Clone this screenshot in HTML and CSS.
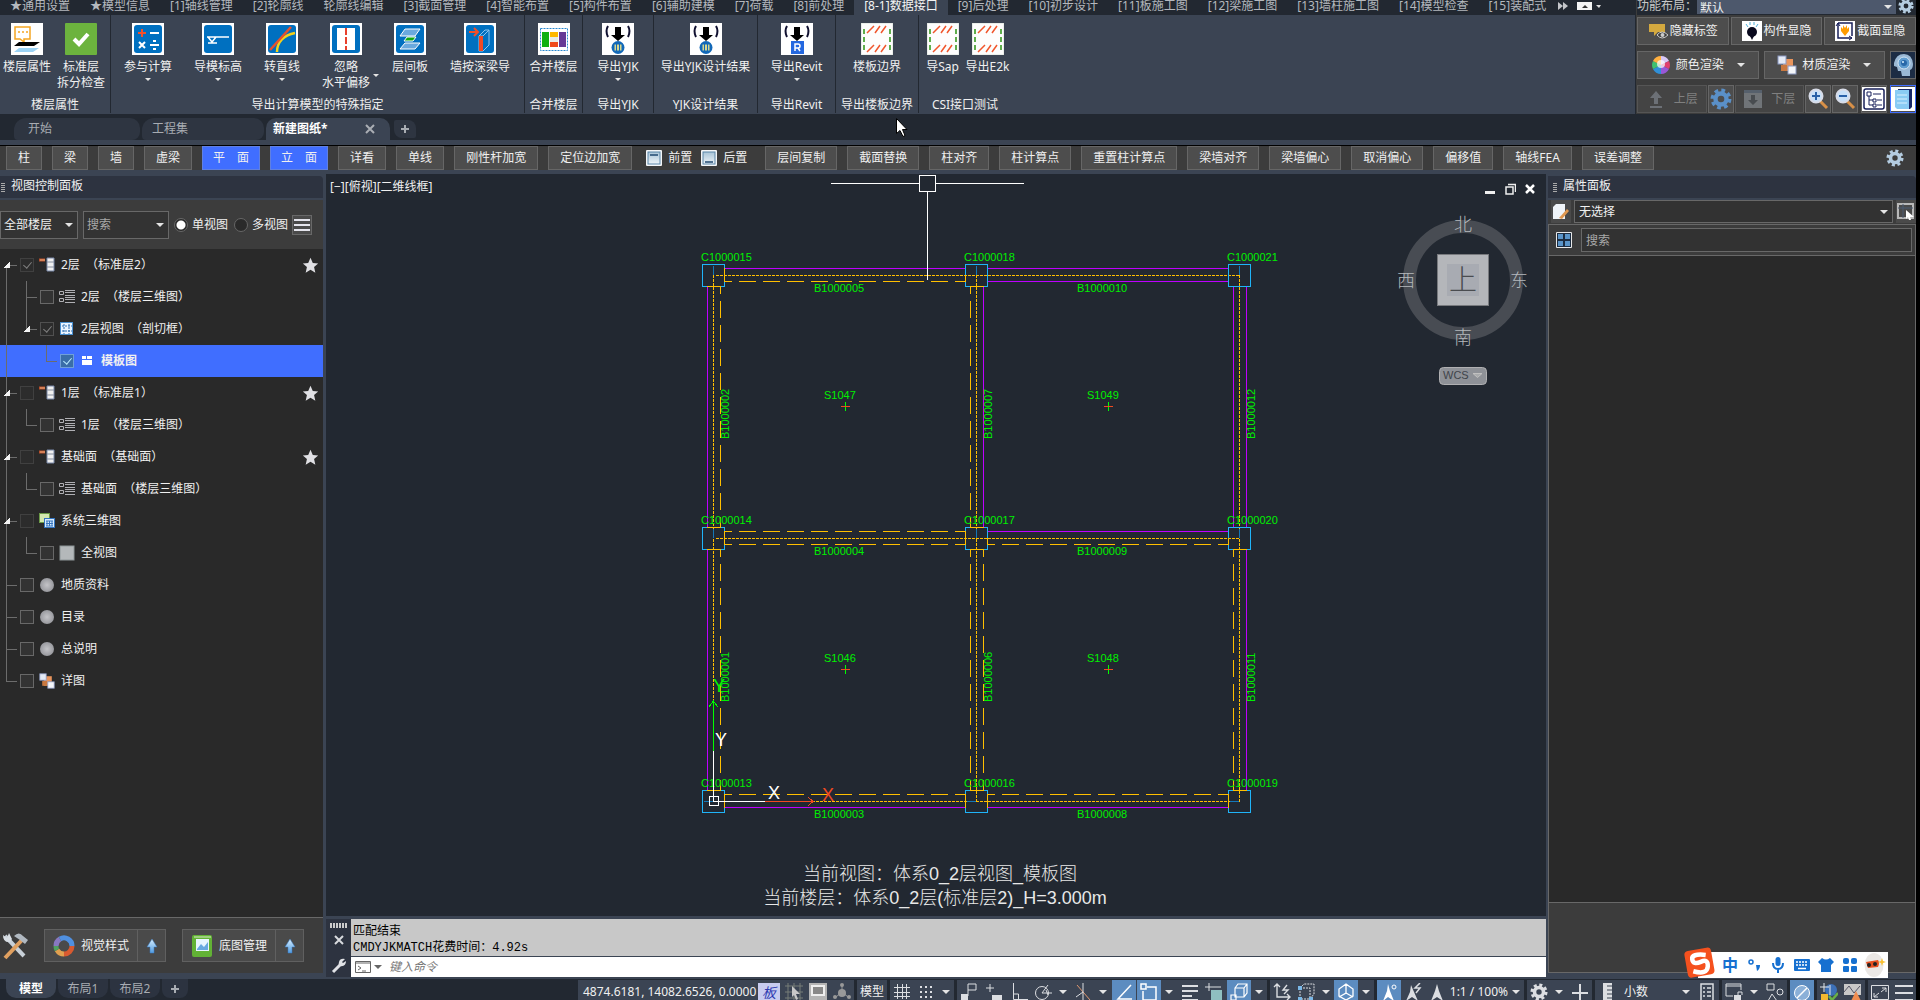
FILE: index.html
```html
<!DOCTYPE html>
<html lang="zh-CN">
<head>
<meta charset="utf-8">
<title>新建图纸*</title>
<link rel="stylesheet" href="styles.css">
</head>
<body>
<svg class="defs" aria-hidden="true">
  <defs>
    <radialGradient id="ball"><stop offset="0" stop-color="#c4c4c8"/><stop offset="1" stop-color="#98999e"/></radialGradient>
    <linearGradient id="glass" x1="0" y1="0" x2="0" y2="1"><stop offset="0" stop-color="#a8c4d8"/><stop offset="1" stop-color="#eef4f8"/></linearGradient>
    <linearGradient id="upblue" x1="0" y1="0" x2="0" y2="1"><stop offset="0" stop-color="#d8efff"/><stop offset="1" stop-color="#4f9ae0"/></linearGradient>
  </defs>
  <symbol id="r-layer" viewBox="0 0 32 32"><rect width="32" height="32" fill="#fff"/><path d="M4 4h15v12h-6v3l-4-3H4z" fill="none" stroke="#f5a623" stroke-width="1.5"/><path d="M7 9h2m2 0h2m2 0h2" stroke="#f5a623" stroke-width="1.5"/><path d="M8 19h21l-6 4H3z" fill="#000"/><path d="M8 25h20l-6 4H3z" fill="#9cd3f5"/></symbol>
  <symbol id="r-check" viewBox="0 0 32 32"><rect width="32" height="32" rx="1" fill="#6cb33e"/><path d="M9 16l5 5 9-10" fill="none" stroke="#fff" stroke-width="4"/></symbol>
  <symbol id="r-calc" viewBox="0 0 32 32"><rect width="32" height="32" fill="#fff"/><rect x="2" y="2" width="28" height="28" rx="3" fill="#0070c0"/><path d="M6 10h8M10 6v8" stroke="#f0502a" stroke-width="2"/><path d="M18 10h9M18 22h9M7 19l6 6m0-6l-6 6" stroke="#fff" stroke-width="2"/><path d="M21 18h3M21 26h3" stroke="#fff" stroke-width="2"/></symbol>
  <symbol id="r-elev" viewBox="0 0 32 32"><rect width="32" height="32" fill="#fff"/><rect x="2" y="2" width="28" height="28" rx="3" fill="#0070c0"/><path d="M5 14h22M6 14l4 5 4-5M6 20h9" fill="none" stroke="#fff" stroke-width="1.5"/></symbol>
  <symbol id="r-line" viewBox="0 0 32 32"><rect width="32" height="32" fill="#fff"/><rect x="2" y="2" width="28" height="28" rx="3" fill="#0070c0"/><path d="M11 29c0-10 7-17 18-19" fill="none" stroke="#f4d21a" stroke-width="2.5"/><path d="M4 27L25 4" stroke="#e8502c" stroke-width="2.5"/></symbol>
  <symbol id="r-off" viewBox="0 0 32 32"><rect width="32" height="32" fill="#fff"/><rect x="2" y="2" width="28" height="28" rx="3" fill="#0070c0"/><rect x="7" y="5" width="18" height="22" fill="#fff"/><path d="M16 5v22" stroke="#e8402c" stroke-width="2" stroke-dasharray="7 2"/></symbol>
  <symbol id="r-slab" viewBox="0 0 32 32"><rect width="32" height="32" fill="#fff"/><rect x="2" y="2" width="28" height="28" rx="3" fill="#0070c0"/><path d="M11 6h15l-5 7H6zM11 20h15l-5 6H6z" fill="#6aa9dd" stroke="#fff"/><path d="M13 14h9l-3 4h-9z" fill="#12a812" stroke="#fff"/></symbol>
  <symbol id="r-wall" viewBox="0 0 32 32"><rect width="32" height="32" fill="#fff"/><rect x="2" y="2" width="28" height="28" rx="3" fill="#0070c0"/><path d="M5 9h8M10 5l4 4-4 4" fill="none" stroke="#f0502a" stroke-width="2"/><path d="M15 13l6-6h4v15l-6 6h-4zM19 13l6-6M15 13h4" fill="none" stroke="#8cc4ee"/><path d="M15 13h4v15h-4z" fill="#f04a24"/></symbol>
  <symbol id="r-merge" viewBox="0 0 32 32"><rect width="32" height="32" fill="#fff"/><rect x="2.500" y="5.500" width="27" height="22" fill="none" stroke="#2888d0" stroke-dasharray="2 1"/><path d="M4 9h7v15H4z" fill="#10b010"/><path d="M12 9h8v5h-8z" fill="#ffb800"/><path d="M12 19h8v5h-8z" fill="#f04a1a"/><path d="M12 14h8v5h-8z" fill="#e8ece8"/><path d="M21 9h7v15h-7z" fill="#653a96"/></symbol>
  <symbol id="r-yjk" viewBox="0 0 32 32"><rect width="32" height="32" fill="#fff"/><path d="M6 3q-3 5 0 11M26 3q3 5 0 11" fill="none" stroke="#101030" stroke-width="2"/><path d="M13 4h6v8h4l-7 6-7-6h4z" fill="#000"/><circle cx="16" cy="24.500" r="6.500" fill="#1268b8"/><path d="M12 21h8v7h-8zM14.500 21v7M17.500 21v7" fill="#d8d890" stroke="#1268b8"/></symbol>
  <symbol id="r-rvt" viewBox="0 0 32 32"><rect width="32" height="32" fill="#fff"/><path d="M6 3q-3 5 0 11M26 3q3 5 0 11" fill="none" stroke="#101030" stroke-width="2"/><path d="M13 4h6v8h4l-7 6-7-6h4z" fill="#000"/><rect x="10" y="18" width="13" height="13" fill="#2468e0"/><path d="M14 28v-7h3q2 0 2 2t-2 2h-3m3 0l2 3" fill="none" stroke="#fff" stroke-width="1.500"/></symbol>
  <symbol id="r-edge" viewBox="0 0 32 32"><rect width="32" height="32" fill="#fdfdfd" stroke="#d8e0d8"/><path d="M6 10l7-7m1 7l5-7m1 7l5-7M6 29l7-7m1 7l5-7m1 7l5-7" stroke="#f0562c" stroke-width="1.500"/><path d="M3 6v24M29 6v24" stroke="#5fae4c" stroke-width="2" stroke-dasharray="5 3"/></symbol>
  <symbol id="gear" viewBox="0 0 20 20"><circle cx="10" cy="10" r="7.500" fill="none" stroke="currentColor" stroke-width="4" stroke-dasharray="3.200 2.700"/><circle cx="10" cy="10" r="5" fill="none" stroke="currentColor" stroke-width="4"/></symbol>
  <symbol id="tag" viewBox="0 0 20 20"><path d="M1 3h16v8h-7l-4 4v-4H1z" fill="#d4a93f"/><path d="M9 14q5-6 11 0q-6 6-11 0z" fill="#3c3c3c" stroke="#ccc"/><circle cx="14.500" cy="14" r="2" fill="#ccc"/></symbol>
  <symbol id="bulb" viewBox="0 0 20 20"><rect width="20" height="20" fill="#fff"/><path d="M4 3l2 3M8 1v3M12 1v3M16 3l-2 3" stroke="#50b0d8"/><circle cx="10" cy="11" r="5" fill="#08081c"/><path d="M8 15h4l-2 4z" fill="#08081c"/></symbol>
  <symbol id="bulb2" viewBox="0 0 20 20"><rect width="20" height="20" fill="#fff"/><path d="M3 2h14v13M3 2v15h14" fill="none" stroke="#18205a" stroke-width="1.500"/><path d="M1 5l2-3 2 3M14 15l3 2-3 2" fill="none" stroke="#18205a"/><path d="M6 6l2 2V4l2 3 2-3v4l2-2v4l-4 5-4-5z" fill="#ff9c00"/></symbol>
  <symbol id="wheel" viewBox="0 0 20 20"><path d="M10 10L10 1A9 9 0 0 1 18 6z" fill="#d8c8f8"/><path d="M10 10L18 6A9 9 0 0 1 18 14z" fill="#e04070"/><path d="M10 10L18 14A9 9 0 0 1 10 19z" fill="#9858d8"/><path d="M10 10V19A9 9 0 0 1 2 14z" fill="#3090d8"/><path d="M10 10L2 14A9 9 0 0 1 2 6z" fill="#40c070"/><path d="M10 10L2 6A9 9 0 0 1 10 1z" fill="#ffb040"/><circle cx="10" cy="9" r="4" fill="#fff" opacity=".7"/></symbol>
  <symbol id="mats" viewBox="0 0 20 20"><path d="M6 4h10v12H6z" fill="#e8945c"/><path d="M4 10h6v6H4z" fill="#c87840"/><rect x="1" y="1" width="8" height="8" fill="#e4eaf6" stroke="#8a98c0"/><rect x="11" y="11" width="8" height="8" fill="#f4f6fa" stroke="#8a98c0"/></symbol>
  <symbol id="head" viewBox="0 0 26 26"><rect width="26" height="26" fill="#1c2c44"/><path d="M4 11Q6 2 14 2t9 10q0 5-3 6v6h-8l-1-5H8l-1-4-3-1z" fill="#9ab8d4"/><circle cx="14" cy="11" r="6" fill="#5f9cd0" stroke="#d0e4f4"/><circle cx="14" cy="11" r="3" fill="#2868a8"/><circle cx="13" cy="10" r="1" fill="#d8f0ff"/></symbol>
  <symbol id="upper" viewBox="0 0 20 20"><path d="M10 2l6 7h-4v6H8V9H4zM4 17h12v2H4z" fill="currentColor"/></symbol>
  <symbol id="lower" viewBox="0 0 20 20"><path d="M1 1h18v18H1z" fill="#707478"/><path d="M1 1h18v3H1z" fill="#56606c"/><path d="M8 6h4v5h3l-5 5-5-5h3z" fill="#484c50"/></symbol>
  <symbol id="zin" viewBox="0 0 22 22"><path d="M13 13l7 7" stroke="#d89048" stroke-width="3"/><circle cx="9" cy="8" r="6.500" fill="#c8e0f8" stroke="#d8dce8" stroke-width="2"/><path d="M5 8h8M9 4v8" stroke="#2860a8" stroke-width="2"/></symbol>
  <symbol id="zout" viewBox="0 0 22 22"><path d="M13 13l7 7" stroke="#d89048" stroke-width="3"/><circle cx="9" cy="8" r="6.500" fill="#c8e0f8" stroke="#d8dce8" stroke-width="2"/><path d="M5 8h8" stroke="#2860a8" stroke-width="2"/></symbol>
  <symbol id="treeic" viewBox="0 0 24 24"><rect width="24" height="24" fill="#fff"/><rect x="2" y="2" width="20" height="20" rx="2" fill="none" stroke="#18205a" stroke-width="1.500"/><path d="M5 5h4v4H5zM11 7h8M7 9v9h4M7 13h4M11 12h3v3h-3zM11 17h3v3h-3zM15 13h5M15 18h5" fill="none" stroke="#18205a"/></symbol>
  <symbol id="book" viewBox="0 0 24 24"><rect width="24" height="24" fill="#fff"/><path d="M7 2h14v18l-2 2H7z" fill="#18286a"/><path d="M4 3h14v19H6l-2-2z" fill="#8accf4"/><path d="M6 8h10M6 12h10M6 16h10" stroke="#d8f0ff"/></symbol>
  <symbol id="front" viewBox="0 0 16 16"><rect width="16" height="16" rx="1" fill="#f4f6f8"/><rect x="2" y="2" width="12" height="12" fill="url(#glass)" stroke="#5a86a8"/><path d="M4 5h8" stroke="#204870" stroke-width="1.500"/></symbol>
  <symbol id="back" viewBox="0 0 16 16"><rect width="16" height="16" rx="1" fill="#f4f6f8"/><rect x="2" y="2" width="12" height="12" fill="url(#glass)" stroke="#5a86a8"/><path d="M4 12h8" stroke="#204870" stroke-width="1.500"/></symbol>
  <symbol id="t-floor" viewBox="0 0 16 16"><path d="M0 3h6" stroke="#b8502c" stroke-width="3"/><path d="M1 3h5" stroke="#f0b080"/><path d="M8 1h7v13H8z" fill="#f0f0f0" stroke="#7888a8"/><path d="M8 5h7M8 10h7" stroke="#8890a0"/></symbol>
  <symbol id="t-list" viewBox="0 0 16 16"><path d="M.5 2.500h4v3h-4zM.5 9.500h4v3h-4z" fill="none" stroke="#b0b0b4"/><path d="M6 1.500h10M6 3.500h10M6 6.500h10M6 8.500h10M6 10.500h10M6 13.500h10" stroke="#b0b0b4"/></symbol>
  <symbol id="t-grid" viewBox="0 0 16 16"><rect x="1.500" y="1.500" width="12" height="12" fill="#eaf4ff" stroke="#4a90d0"/><path d="M5 3v10M10 3v10M3 5h10M3 10h10" stroke="#3070b0" stroke-dasharray="2 1"/></symbol>
  <symbol id="t-mod" viewBox="0 0 16 16"><path d="M3 3h4v3H3zM8 3h5v3H8zM3 7h10v5H3z" fill="#fff"/></symbol>
  <symbol id="t-sys" viewBox="0 0 16 16"><rect x=".5" y=".5" width="10" height="9" fill="#d4e8b0" stroke="#6c9a48"/><rect x="5.500" y="5.500" width="10" height="9" fill="#d8ecff" stroke="#3474c0"/><path d="M8 8v5M10.500 8v5M13 8v5M7 8h7M7 10.500h7M7 13h7" stroke="#3474c0"/></symbol>
  <symbol id="t-sq" viewBox="0 0 16 16"><rect x="1" y="1" width="14" height="14" fill="#b4b8ba" stroke="#8e9698"/></symbol>
  <symbol id="t-ball" viewBox="0 0 16 16"><circle cx="8" cy="8" r="7" fill="url(#ball)"/></symbol>
  <symbol id="star" viewBox="0 0 20 20"><path d="M10 1l2.700 6 6.300.6-4.800 4.300 1.500 6.500L10 15l-5.700 3.400 1.500-6.500L1 7.600 7.300 7z" fill="#e0e0e4"/></symbol>
  <symbol id="x" viewBox="0 0 10 10"><path d="M1 1l8 8M9 1l-8 8" stroke="currentColor" stroke-width="2"/></symbol>
  <symbol id="plus" viewBox="0 0 10 10"><path d="M5 1v8M1 5h8" stroke="currentColor" stroke-width="2"/></symbol>
  <symbol id="up" viewBox="0 0 12 16"><path d="M6 1l5 8H8v6H4V9H1z" fill="url(#upblue)" stroke="#3878c0" stroke-width=".5"/></symbol>
  <symbol id="tools" viewBox="0 0 28 28"><path d="M4 4l19 20" stroke="#c8d0d8" stroke-width="4"/><path d="M2 3q0 8 7 7l2-3-3-6-2 5z" fill="#d8dee4"/><path d="M21 8L4 26" stroke="#e0a060" stroke-width="4"/><path d="M13 4q5-5 9 0l5 4-3 4-5-4z" fill="#b0b8c0"/></symbol>
  <symbol id="ring" viewBox="0 0 22 22"><g fill="none" stroke-width="5"><path d="M3 11A8 8 0 0 1 7 4" stroke="#8878c0"/><path d="M7 4A8 8 0 0 1 19 11" stroke="#5090e0"/><path d="M19 11A8 8 0 0 1 11 19" stroke="#d85a30"/><path d="M11 19A8 8 0 0 1 4 15" stroke="#e0a050"/><path d="M4 15A8 8 0 0 1 3 11" stroke="#50a060"/></g></symbol>
  <symbol id="pic" viewBox="0 0 20 22"><rect width="20" height="22" rx="2" fill="#62b235"/><path d="M2 2h17" stroke="#d8ecc8"/><rect x="4" y="4" width="13" height="12" fill="#e8f4ff"/><path d="M5 14l4-5 3 3 4-5v8H5z" fill="#68a8e0"/></symbol>
  <symbol id="wrench" viewBox="0 0 16 16"><path d="M2 14l7-7" stroke="#e0e2e6" stroke-width="3"/><path d="M14 1l-3 3 1 1 3-2q0 6-6 5-2-1-1-4 1-4 6-3z" fill="#e0e2e6"/></symbol>
  <symbol id="prompt" viewBox="0 0 16 14"><path d="M.5 1.500h15v11H.5zM.5 3h15" fill="none" stroke="#666"/><path d="M3 6l3 2-3 2M7 11h4" fill="none" stroke="#666"/></symbol>
  <symbol id="page" viewBox="0 0 18 18"><path d="M4 1h9v15H1V4z" fill="#f0f4f8"/><path d="M7 15l8-9 2 2-7 8z" fill="#e09850"/></symbol>
  <symbol id="pick" viewBox="0 0 18 18"><path d="M1 1h15v14H1z" fill="none" stroke="#b8b8b8" stroke-width="2"/><path d="M1 5h15M6 1v14" stroke="#4a5a70"/><path d="M9 7l8 7-4 0 1 3-2 0-1-3-2 2z" fill="#fff"/></symbol>
  <symbol id="win4" viewBox="0 0 16 16"><path d="M.5.5h15v15H.5z" fill="#1c2c40" stroke="#e8e8e8"/><path d="M2 2h5v5H2zM9 2h5v5H9zM2 9h5v5H2zM9 9h5v5H9z" fill="#5a94c8"/></symbol>
  <symbol id="s-cur" viewBox="0 0 18 18"><path d="M0 3h18M0 9h18M0 15h18M3 0v18M9 0v18M15 0v18" stroke="#767c78" fill="none"/><path d="M7 3l8 8h-4l2 5-2 1-2-5-2 2z" fill="#c8c8c8"/></symbol>
  <symbol id="s-sq" viewBox="0 0 18 18"><rect width="18" height="18" fill="#b4b4b4"/><rect x="3" y="3" width="12" height="9" fill="#888" stroke="#eee" stroke-width="2"/></symbol>
  <symbol id="s-mol" viewBox="0 0 18 18"><path d="M9 2v7l-6 5M9 9l6 5" stroke="#999" fill="none"/><circle cx="9" cy="10" r="4" fill="#999"/><circle cx="9" cy="2" r="2" fill="#999"/><circle cx="2" cy="14" r="2" fill="#999"/><circle cx="16" cy="14" r="2" fill="#999"/></symbol>
  <symbol id="s-grid" viewBox="0 0 18 18"><path d="M4.500 1v15M9.500 1v15M13.500 1v15M1 4.500h16M1 9.500h16M1 13.500h16" stroke="#dcdee2" fill="none"/></symbol>
  <symbol id="s-dots" viewBox="0 0 18 18"><path d="M3 4h12M3 9h12M3 14h12" stroke="#dcdee2" stroke-width="2" stroke-dasharray="2 3"/></symbol>
  <symbol id="s-snap" viewBox="0 0 18 18"><path d="M8 13V1h8v6H8" fill="none" stroke="#dcdee2"/><path d="M1 11h7v7H1z" fill="#dcdee2"/></symbol>
  <symbol id="s-dyn" viewBox="0 0 18 18"><path d="M5 1v8M1 5h8" stroke="#dcdee2"/><path d="M7 12h10v5H7z" fill="#dcdee2"/></symbol>
  <symbol id="s-ortho" viewBox="0 0 18 18"><path d="M3.500 0v16.500H18M3.500 11h5v5" fill="none" stroke="#dcdee2"/></symbol>
  <symbol id="s-pol" viewBox="0 0 18 18"><circle cx="8" cy="10" r="6.500" fill="none" stroke="#dcdee2"/><path d="M8 10L14 2M8 10h10M12 7l2 5" stroke="#dcdee2" fill="none"/></symbol>
  <symbol id="s-iso" viewBox="0 0 18 18"><path d="M3 2l13 15" stroke="#e09870"/><path d="M9 0v18M9 9l-7 5" stroke="#dcdee2"/></symbol>
  <symbol id="s-ang" viewBox="0 0 18 18"><path d="M16 2L3 16h14" fill="none" stroke="#fff" stroke-width="1.500"/></symbol>
  <symbol id="s-osn" viewBox="0 0 18 18"><path d="M7 4h9v13H3V8M1 1h5v5H1z" fill="none" stroke="#fff" stroke-width="1.500"/></symbol>
  <symbol id="s-lw" viewBox="0 0 18 18"><path d="M1 3h16M1 8h9M10 8h7M1 13h10M1 17h16" stroke="#dcdee2" stroke-width="2"/></symbol>
  <symbol id="s-tr" viewBox="0 0 18 18"><path d="M4 0v8M0 4h16" stroke="#dcdee2"/><path d="M6 7h11v11H6z" fill="#8fc0c0"/></symbol>
  <symbol id="s-cube" viewBox="0 0 18 18"><path d="M5 5l3-4h9v9l-3 4H5zM5 5h9v9M14 5l3-4M1 12h5v5H1z" fill="none" stroke="#fff" stroke-width="1.200"/></symbol>
  <symbol id="s-ucs" viewBox="0 0 18 18"><path d="M4 1v13h13M1 4l3-3 3 3M14 11l3 3-3 3M14 2l-4 5h5l-4 4" fill="none" stroke="#dcdee2" stroke-width="1.400"/></symbol>
  <symbol id="s-box" viewBox="0 0 18 18"><path d="M3 5l4-4h10v10l-4 5H3zM3 5h10v11" fill="none" stroke="#dcdee2" stroke-dasharray="2 1"/><path d="M1 3h4v4H1zM1 14h4v4H1zM12 14h4v4h-4z" fill="#7ab8e8"/></symbol>
  <symbol id="s-giz" viewBox="0 0 18 18"><path d="M9 1l7 5v7l-7 4-7-4V6zM9 1v9l-7 4M9 10l7 4" fill="none" stroke="#fff" stroke-width="1.300"/></symbol>
  <symbol id="s-ann" viewBox="0 0 18 18"><path d="M8 1L10 8l4 10-6-4-5 4 4-10z" fill="#fff"/><circle cx="14" cy="4" r="2" fill="none" stroke="#fff"/></symbol>
  <symbol id="s-ann2" viewBox="0 0 18 18"><path d="M7 2l3 7 4 9-6-4-6 4 4-9z" fill="#dcdee2"/><path d="M16 0l-5 5h5l-4 5" fill="none" stroke="#dcdee2" stroke-width="1.500"/></symbol>
  <symbol id="s-ann3" viewBox="0 0 18 18"><path d="M9 1l2 7 4 10-6-4-6 4 4-10z" fill="#dcdee2"/></symbol>
  <symbol id="s-plus" viewBox="0 0 18 18"><path d="M9 1v17M1 10h16" stroke="#dcdee2" stroke-width="2"/></symbol>
  <symbol id="s-rul" viewBox="0 0 18 18"><path d="M5 0h9v18H5z" fill="#dcdee2"/><path d="M9 3h5M9 7h5M9 11h5M9 15h5" stroke="#3b4453"/></symbol>
  <symbol id="s-prop" viewBox="0 0 18 18"><path d="M3 1h12v17H3zM5 5h2M9 5h4M5 9h2M9 9h4M5 13h2M9 13h4" fill="none" stroke="#dcdee2" stroke-width="1.500"/></symbol>
  <symbol id="s-lock" viewBox="0 0 18 18"><path d="M8 13H1V1h15v6M1 3h15" fill="none" stroke="#dcdee2"/><path d="M9 12h7v6H9z" fill="#dcdee2"/><path d="M13 12V9h4v3" fill="none" stroke="#dcdee2"/></symbol>
  <symbol id="s-shp" viewBox="0 0 18 18"><path d="M1 1h7v6H1zM6 11l5 7H2z" fill="none" stroke="#dcdee2"/><circle cx="14" cy="9" r="3" fill="none" stroke="#dcdee2"/></symbol>
  <symbol id="s-perf" viewBox="0 0 18 18"><circle cx="9" cy="10" r="7.500" fill="#8ab0d8" stroke="#fff"/><path d="M4 15L14 5" stroke="#fff" stroke-width="1.500"/></symbol>
  <symbol id="s-geo" viewBox="0 0 18 18"><circle cx="11" cy="7" r="6" fill="#3c70b8"/><path d="M4 0v9M0 4h9M10 2v10" stroke="#e4e8ee" fill="none"/><path d="M1 11h7v6H1z" fill="#f4b830"/><path d="M9 13l3 4 6-7" fill="none" stroke="#68b048" stroke-width="2.500"/></symbol>
  <symbol id="s-pulse" viewBox="0 0 18 18"><path d="M0 1h17v11H0z" fill="#c8c8c8"/><path d="M0 9l5-6 5 7 6-7" fill="none" stroke="#556"/><path d="M12 8l5 10H7z" fill="#f08c50"/></symbol>
  <symbol id="s-exp" viewBox="0 0 18 18"><path d="M.5 2.500h17v14H.5zM10 9l5-4M11 5h4v4M8 10l-5 4M3 10v4h4" fill="none" stroke="#dcdee2"/></symbol>
  <symbol id="s-ham" viewBox="0 0 18 18"><path d="M0 3h18M0 10h18M0 17h18" stroke="#dcdee2" stroke-width="2"/></symbol>
</svg>

<div class="top">
  <div class="ribbon-side">
    <nav class="menu">
      <a href="#">★通用设置</a><a href="#">★模型信息</a><a href="#">[1]轴线管理</a><a href="#">[2]轮廓线</a><a href="#">轮廓线编辑</a><a href="#">[3]截面管理</a><a href="#">[4]智能布置</a><a href="#">[5]构件布置</a><a href="#">[6]辅助建模</a><a href="#">[7]荷载</a><a href="#">[8]前处理</a><a href="#" class="on">[8-1]数据接口</a><a href="#">[9]后处理</a><a href="#">[10]初步设计</a><a href="#">[11]板施工图</a><a href="#">[12]梁施工图</a><a href="#">[13]墙柱施工图</a><a href="#">[14]模型检查</a><a href="#">[15]装配式</a>
      <svg class="menu-more" viewBox="0 0 46 12"><path d="M2 2l5 4-5 4zM7 2l5 4-5 4z" fill="#c4c6ca"/><path d="M21 2h15v8H21z" fill="#f4f4f4"/><path d="M26 8l3-3 3 3z" fill="#333"/><path d="M40 5h5l-2 3z" fill="#ddd"/></svg>
    </nav>
    <div class="ribbon">
      <section class="grp g111"><div class="items">
        <button class="w54"><svg><use href="#r-layer"/></svg><span>楼层属性</span></button>
        <button class="w54"><svg><use href="#r-check"/></svg><span>标准层<br>拆分检查</span></button></div><h2>楼层属性</h2></section>
      <section class="grp g414"><div class="items">
        <button class="w74 dd"><svg><use href="#r-calc"/></svg><span>参与计算</span></button>
        <button class="w66 dd"><svg><use href="#r-elev"/></svg><span>导模标高</span></button>
        <button class="w62 dd"><svg><use href="#r-line"/></svg><span>转直线</span></button>
        <button class="w66 dd side"><svg><use href="#r-off"/></svg><span>忽略<br>水平偏移</span></button>
        <button class="w62 dd"><svg><use href="#r-slab"/></svg><span>层间板</span></button>
        <button class="w78 dd"><svg><use href="#r-wall"/></svg><span>墙按深梁导</span></button></div><h2>导出计算模型的特殊指定</h2></section>
      <section class="grp g58"><div class="items"><button><svg><use href="#r-merge"/></svg><span>合并楼层</span></button></div><h2>合并楼层</h2></section>
      <section class="grp g71"><div class="items"><button class="dd"><svg><use href="#r-yjk"/></svg><span>导出YJK</span></button></div><h2>导出YJK</h2></section>
      <section class="grp g104"><div class="items"><button><svg><use href="#r-yjk"/></svg><span>导出YJK设计结果</span></button></div><h2>YJK设计结果</h2></section>
      <section class="grp g78"><div class="items"><button class="dd"><svg><use href="#r-rvt"/></svg><span>导出Revit</span></button></div><h2>导出Revit</h2></section>
      <section class="grp g83"><div class="items"><button><svg><use href="#r-edge"/></svg><span>楼板边界</span></button></div><h2>导出楼板边界</h2></section>
      <section class="grp last"><div class="items"><button class="w45"><svg><use href="#r-edge"/></svg><span>导Sap</span></button><button class="w45"><svg><use href="#r-edge"/></svg><span>导出E2k</span></button></div><h2>CSI接口测试</h2></section>
    </div>
  </div>
  <div class="tools">
    <div class="layout"><label for="layout">功能布局：</label><span class="sel"><select id="layout"><option>默认</option></select></span><button class="bare" aria-label="设置"><svg class="i16 pale"><use href="#gear"/></svg></button></div>
    <div class="trow">
      <button class="btn grow"><svg class="i20"><use href="#tag"/></svg>隐藏标签</button>
      <button class="btn grow"><svg class="i20"><use href="#bulb"/></svg>构件显隐</button>
      <button class="btn grow"><svg class="i20"><use href="#bulb2"/></svg>截面显隐</button>
    </div>
    <div class="trow wide">
      <button class="btn grow arrow"><svg class="i20"><use href="#wheel"/></svg>颜色渲染</button>
      <button class="btn grow arrow"><svg class="i20"><use href="#mats"/></svg>材质渲染</button>
      <button class="btn sq" aria-label="渲染"><svg class="i26"><use href="#head"/></svg></button>
    </div>
    <div class="trow tight">
      <button class="btn grow off" disabled><svg class="i20"><use href="#upper"/></svg>上层</button>
      <button class="btn sq" aria-label="楼层设置"><svg class="i22 blue"><use href="#gear"/></svg></button>
      <button class="btn grow off" disabled><svg class="i20"><use href="#lower"/></svg>下层</button>
      <button class="btn sq" aria-label="放大"><svg class="i22"><use href="#zin"/></svg></button>
      <button class="btn sq" aria-label="缩小"><svg class="i22"><use href="#zout"/></svg></button>
      <button class="btn sq apart" aria-label="结构树"><svg class="i24"><use href="#treeic"/></svg></button>
      <button class="btn sq apart sel-on" aria-label="属性"><svg class="i24"><use href="#book"/></svg></button>
    </div>
  </div>
</div>

<nav class="tabs">
  <a href="#" class="tab">开始</a><a href="#" class="tab">工程集</a><a href="#" class="tab on">新建图纸*<svg class="i10"><use href="#x"/></svg></a><button class="tab-add" aria-label="新建"><svg class="i10"><use href="#plus"/></svg></button>
</nav>

<div class="toolbar">
  <button class="btn">柱</button><button class="btn">梁</button><button class="btn">墙</button><button class="btn">虚梁</button><button class="btn act">平&emsp;面</button><button class="btn act">立&emsp;面</button><button class="btn">详看</button><button class="btn">单线</button><button class="btn">刚性杆加宽</button><button class="btn">定位边加宽</button>
  <div class="order"><button class="bare"><svg class="i16"><use href="#front"/></svg>前置</button><button class="bare"><svg class="i16"><use href="#back"/></svg>后置</button></div>
  <button class="btn">层间复制</button><button class="btn">截面替换</button><button class="btn">柱对齐</button><button class="btn">柱计算点</button><button class="btn">重置柱计算点</button><button class="btn">梁墙对齐</button><button class="btn">梁墙偏心</button><button class="btn">取消偏心</button><button class="btn">偏移值</button><button class="btn">轴线FEA</button><button class="btn">误差调整</button>
  <button class="bare end" aria-label="工具栏设置"><svg class="i18 pale"><use href="#gear"/></svg></button>
</div>

<main class="main">
  <aside class="left">
    <h2 class="ph">视图控制面板</h2>
    <div class="filter">
      <span class="sel f1"><select aria-label="楼层"><option>全部楼层</option></select></span>
      <span class="sel f2"><select aria-label="搜索" class="dim"><option>搜索</option></select></span>
      <label><input type="radio" name="v" checked>单视图</label>
      <label><input type="radio" name="v">多视图</label>
      <button class="burger" aria-label="菜单"><i></i><i></i><i></i></button>
    </div>
    <ul class="tree">
      <li><i class="g t first open"></i><label><input type="checkbox" class="dis" checked><svg class="i16"><use href="#t-floor"/></svg>2层&nbsp; （标准层2）</label><svg class="star"><use href="#star"/></svg></li>
      <li><i class="g v"></i><i class="g t"></i><label><input type="checkbox"><svg class="i16"><use href="#t-list"/></svg>2层&nbsp; （楼层三维图）</label></li>
      <li><i class="g v"></i><i class="g l open"></i><label><input type="checkbox" class="dis2" checked><svg class="i16"><use href="#t-grid"/></svg>2层视图&nbsp; （剖切框）</label></li>
      <li class="cur"><i class="g v"></i><i class="g"></i><i class="g l"></i><label><input type="checkbox" checked><svg class="i16"><use href="#t-mod"/></svg>模板图</label></li>
      <li><i class="g t open"></i><label><input type="checkbox" class="dis"><svg class="i16"><use href="#t-floor"/></svg>1层&nbsp; （标准层1）</label><svg class="star"><use href="#star"/></svg></li>
      <li><i class="g v"></i><i class="g l"></i><label><input type="checkbox"><svg class="i16"><use href="#t-list"/></svg>1层&nbsp; （楼层三维图）</label></li>
      <li><i class="g t open"></i><label><input type="checkbox" class="dis"><svg class="i16"><use href="#t-floor"/></svg>基础面&nbsp; （基础面）</label><svg class="star"><use href="#star"/></svg></li>
      <li><i class="g v"></i><i class="g l"></i><label><input type="checkbox"><svg class="i16"><use href="#t-list"/></svg>基础面&nbsp; （楼层三维图）</label></li>
      <li><i class="g t open"></i><label><input type="checkbox" class="dis"><svg class="i16"><use href="#t-sys"/></svg>系统三维图</label></li>
      <li><i class="g v"></i><i class="g l"></i><label><input type="checkbox"><svg class="i16"><use href="#t-sq"/></svg>全视图</label></li>
      <li><i class="g t"></i><label><input type="checkbox"><svg class="i16"><use href="#t-ball"/></svg>地质资料</label></li>
      <li><i class="g t"></i><label><input type="checkbox"><svg class="i16"><use href="#t-ball"/></svg>目录</label></li>
      <li><i class="g t"></i><label><input type="checkbox"><svg class="i16"><use href="#t-ball"/></svg>总说明</label></li>
      <li><i class="g l"></i><label><input type="checkbox"><svg class="i16"><use href="#mats"/></svg>详图</label></li>
    </ul>
    <div class="lfoot">
      <svg class="i28"><use href="#tools"/></svg>
      <div class="split"><button><svg class="i22"><use href="#ring"/></svg>视觉样式</button><button aria-label="展开视觉样式"><svg class="i16"><use href="#up"/></svg></button></div>
      <div class="split"><button><svg class="i22"><use href="#pic"/></svg>底图管理</button><button aria-label="展开底图管理"><svg class="i16"><use href="#up"/></svg></button></div>
    </div>
  </aside>

  <section class="center">
    <div class="view">
      <svg class="cad" viewBox="326 174 1220 742" shape-rendering="crispEdges">
        <g class="purple">
          <path d="M724 268.500H966M987 268.500H1229M987 281.500H1229M987 531.500H1229M724 807.500H966M987 807.500H1229"/>
          <path d="M707.500 286V528M707.500 549V791M983.500 286V528M1233.500 286V528M1246.500 286V528M1246.500 549V791"/>
        </g>
        <g class="dash">
          <path d="M724 281.500H966"/><path d="M724 531.500H966"/><path d="M724 544.500H966"/><path d="M987 544.500H1229"/><path d="M724 794.500H966"/><path d="M987 794.500H1229"/>
          <path d="M720.500 286V528"/><path d="M720.500 549V791"/><path d="M970.500 286V528"/><path d="M970.500 549V791"/><path d="M983.500 549V791"/><path d="M1233.500 549V791"/>
        </g>
        <g class="axis"><path d="M716 275.500H1240"/><path d="M716 538.500H1240"/><path d="M716 801.500H1240"/><path d="M713.500 275V802"/><path d="M976.500 275V802"/><path d="M1239.500 275V802"/></g>
        <g class="cols">
          <path d="M702.500 264.500h22v22h-22zM965.500 264.500h22v22h-22zM1228.500 264.500h22v22h-22zM702.500 527.500h22v22h-22zM965.500 527.500h22v22h-22zM1228.500 527.500h22v22h-22zM702.500 790.500h22v22h-22zM965.500 790.500h22v22h-22zM1228.500 790.500h22v22h-22z"/>
        </g>
        <path class="edge" d="M724.500 268v14M707 286.500h14M965.500 275v7M970 286.500h14M707 527.500h14M970 527.500h14M724.500 531v14M965.500 531v14M707 549.500h14M970 549.500h14M1233 549.500h14M707 790.500h14M970 790.500h14M1233 790.500h14M724.500 794v14M987.500 794v14M965.500 794v14M1228.500 794v14M987.500 538v7M1228.500 538v7"/>
        <path class="node" d="M713.500 266v9M976.500 266v9M1239.500 266v9M713.500 529v9M976.500 529v9M1239.500 529v9M704 801.500h9M967 801.500h9M1230 801.500h9"/>
        <g class="names">
          <text x="701" y="261">C1000015</text><text x="964" y="261">C1000018</text><text x="1227" y="261">C1000021</text>
          <text x="701" y="524">C1000014</text><text x="964" y="524">C1000017</text><text x="1227" y="524">C1000020</text>
          <text x="701" y="787">C1000013</text><text x="964" y="787">C1000016</text><text x="1227" y="787">C1000019</text>
          <text x="814" y="292">B1000005</text><text x="1077" y="292">B1000010</text>
          <text x="814" y="555">B1000004</text><text x="1077" y="555">B1000009</text>
          <text x="814" y="818">B1000003</text><text x="1077" y="818">B1000008</text>
          <text transform="translate(729 439) rotate(-90)">B1000002</text><text transform="translate(992 439) rotate(-90)">B1000007</text><text transform="translate(1255 439) rotate(-90)">B1000012</text>
          <text transform="translate(729 702) rotate(-90)">B1000001</text><text transform="translate(992 702) rotate(-90)">B1000006</text><text transform="translate(1255 702) rotate(-90)">B1000011</text>
          <text x="824" y="399">S1047</text><text x="1087" y="399">S1049</text><text x="824" y="662">S1046</text><text x="1087" y="662">S1048</text>
        </g>
        <path d="M845.500 402v9M1108.500 402v9M845.500 665v9M1108.500 665v9" stroke="#0f0"/>
        <path d="M841 406.500h9M1104 406.500h9M841 669.500h9M1104 669.500h9" stroke="#f04a20"/>
        <g fill="none">
          <path d="M713.500 701v50M709 707l4.500-6 4.500 6" stroke="#0f0"/>
          <path d="M764 801.500h49M808 797l5 4.500-5 4.500" stroke="#f04a20"/>
          <path d="M713.500 751v50h51M709.500 796.500h9v9h-9z" stroke="#fff"/>
        </g>
        <g class="ucs"><text x="713" y="692" fill="#0f0">Y</text><text x="715" y="746" fill="#fff">Y</text><text x="768" y="799" fill="#fff">X</text><text x="822" y="801" fill="#f04a20">X</text></g>
        <path d="M831 183.500h88M936 183.500h88M919.500 175.500h16v16h-16zM927.500 192v88" fill="none" stroke="#fff"/>
        <g class="caption"><text x="940" y="880">当前视图：体系0_2层视图_模板图</text><text x="935" y="904">当前楼层：体系0_2层(标准层2)_H=3.000m</text></g>
        <g shape-rendering="auto">
          <circle cx="1463" cy="280" r="53.500" fill="none" stroke="#484c53" stroke-width="13"/>
          <rect x="1437.500" y="254.500" width="51" height="51" fill="#b4b6ba" stroke="#787a7e"/>
          <rect x="1447" y="264" width="32" height="32" fill="#a8abb2"/>
          <g class="compass"><text x="1463" y="231">北</text><text x="1463" y="344">南</text><text x="1406" y="287">西</text><text x="1519" y="287">东</text></g>
          <text class="cube" x="1463" y="290">上</text>
          <rect x="1439.500" y="367.500" width="47" height="17" rx="4" fill="#8e9197" stroke="#b0b0b2"/>
          <text class="wcs" x="1443" y="379">WCS</text><path d="M1473 373.500h9l-4.500 4z" fill="#a9abad" stroke="#c0c0c0"/>
        </g>
      </svg>
      <span class="vlabel">[−][俯视][二维线框]</span>
      <div class="wctl">
        <button aria-label="最小化"><svg viewBox="0 0 12 12"><path d="M1 9.500h10" stroke="#eee" stroke-width="3"/></svg></button>
        <button aria-label="还原"><svg viewBox="0 0 12 12"><path d="M2 4h7v7H2zM4 1.500h7.500V9" fill="none" stroke="#eee" stroke-width="1.500"/></svg></button>
        <button aria-label="关闭"><svg viewBox="0 0 12 12"><path d="M2 2l8 8M10 2l-8 8" stroke="#fff" stroke-width="2.500"/></svg></button>
      </div>
    </div>
    <div class="cmd">
      <div class="cmdbar"><i class="dots"></i><svg class="i10"><use href="#x"/></svg><svg class="i16"><use href="#wrench"/></svg></div>
      <div class="cmdbody">
        <div class="hist">匹配结束<br>CMDYJKMATCH花费时间：4.92s</div>
        <div class="entry"><svg class="i16"><use href="#prompt"/></svg><i class="car"></i><input type="text" placeholder="键入命令" aria-label="命令行"></div>
      </div>
    </div>
  </section>

  <aside class="right">
    <h2 class="ph">属性面板</h2>
    <div class="prow"><button class="bare" aria-label="编辑"><svg class="i18"><use href="#page"/></svg></button><span class="sel"><select aria-label="选择"><option>无选择</option></select></span><button class="bare" aria-label="拾取"><svg class="i18"><use href="#pick"/></svg></button></div>
    <div class="prow two"><svg class="i16"><use href="#win4"/></svg><input type="text" placeholder="搜索" aria-label="搜索属性"></div>
    <div class="pbody"></div>
    <div class="pfoot"></div>
  </aside>
</main>

<footer class="status">
  <nav class="ltabs"><a href="#" class="on">模型</a><a href="#">布局1</a><a href="#">布局2</a><button aria-label="新建布局"><svg class="i10"><use href="#plus"/></svg></button></nav>
  <div class="sbar">
    <div class="sg"><span class="coord">4874.6181, 14082.6526, 0.0000</span><button class="ban">板</button><button><svg><use href="#s-cur"/></svg></button><button><svg><use href="#s-sq"/></svg></button><button><svg><use href="#s-mol"/></svg></button></div>
    <div class="sg"><button class="w30">模型</button></div>
    <div class="sg"><button><svg><use href="#s-grid"/></svg></button><button><svg><use href="#s-dots"/></svg></button><button class="c"></button></div>
    <div class="sg"><button><svg><use href="#s-snap"/></svg></button><button class="ln"><svg><use href="#s-dyn"/></svg></button><button class="ln"><svg><use href="#s-ortho"/></svg></button><button><svg><use href="#s-pol"/></svg></button><button class="c"></button><button><svg><use href="#s-iso"/></svg></button><button class="c"></button><button class="on ln"><svg><use href="#s-ang"/></svg></button><button class="on ln"><svg><use href="#s-osn"/></svg></button><button class="c"></button><button class="ln"><svg><use href="#s-lw"/></svg></button><button><svg><use href="#s-tr"/></svg></button><button class="on ln"><svg><use href="#s-cube"/></svg></button><button class="c"></button></div>
    <div class="sg"><button><svg><use href="#s-ucs"/></svg></button><button><svg><use href="#s-box"/></svg></button><button class="c"></button><button class="on"><svg><use href="#s-giz"/></svg></button><button class="c"></button></div>
    <div class="sg"><button class="on"><svg><use href="#s-ann"/></svg></button><button><svg><use href="#s-ann2"/></svg></button><button><svg><use href="#s-ann3"/></svg></button><button class="w60 r">1:1 / 100%</button><button class="c"></button></div>
    <div class="sg"><button><svg class="lite"><use href="#gear"/></svg></button><button class="c"></button><button class="ln"><svg><use href="#s-plus"/></svg></button></div>
    <div class="sg"><button><svg><use href="#s-rul"/></svg></button><button class="w60 l">小数</button><button class="c"></button><button class="ln"><svg><use href="#s-prop"/></svg></button></div>
    <div class="sg"><button><svg><use href="#s-lock"/></svg></button><button class="c"></button><button class="ln"><svg><use href="#s-shp"/></svg></button></div>
    <div class="sg"><button class="on"><svg><use href="#s-perf"/></svg></button></div>
    <div class="sg"><button><svg><use href="#s-geo"/></svg></button><button><svg><use href="#s-pulse"/></svg></button></div>
    <div class="sg"><button><svg><use href="#s-exp"/></svg></button><button><svg><use href="#s-ham"/></svg></button></div>
  </div>
</footer>

<div class="ime">
  <svg class="logo" viewBox="0 0 32 32"><g transform="rotate(-10 16 16)"><rect x="2" y="2" width="27" height="27" rx="4" fill="#f5511e"/><path d="M23 9q-14-4-14 2t8 4 6 6-15 2" fill="none" stroke="#fff" stroke-width="4.500"/></g></svg>
  <b>中</b>
  <svg viewBox="0 0 16 16"><circle cx="5" cy="5" r="2" fill="none" stroke="#1670d0" stroke-width="1.500"/><path d="M10 8h4q0 4-3 6z" fill="#1670d0"/></svg>
  <svg viewBox="0 0 16 16"><rect x="5.500" y="0" width="5" height="9" rx="2.500" fill="#1670d0"/><path d="M3 6q0 6 5 6t5-6M8 12v4" fill="none" stroke="#1670d0" stroke-width="2"/></svg>
  <svg viewBox="0 0 16 16"><rect x="0" y="2" width="16" height="12" rx="1" fill="#1670d0"/><path d="M2 5h12M2 8h12" stroke="#fff" stroke-width="1.500" stroke-dasharray="2 1"/><path d="M4 11.500h8" stroke="#fff" stroke-width="1.500"/></svg>
  <svg viewBox="0 0 16 16"><path d="M4 1q4 3 8 0l4 4-3 3v7H3V8L0 5z" fill="#1670d0"/></svg>
  <svg viewBox="0 0 16 16"><g fill="#1670d0"><rect x="1" y="1" width="6" height="6" rx="2"/><rect x="9" y="1" width="6" height="6" rx="2"/><rect x="1" y="9" width="6" height="6" rx="1"/><rect x="9" y="9" width="6" height="6" rx="1"/></g></svg>
  <svg class="face" viewBox="0 0 22 26"><ellipse cx="10" cy="13" rx="9.500" ry="12" fill="#ebe8e5"/><path d="M2 10l12-2q2 3 0 7l-10 1z" fill="#e85020"/><circle cx="5" cy="13" r="2" fill="#222"/><circle cx="11" cy="12" r="2" fill="#222"/><path d="M18 6l1 3 3 1-3 1-1 3-1-3-3-1 3-1z" fill="#f8c030"/></svg>
</div>
<svg class="pointer" viewBox="0 0 12 19"><path d="M.5.500v15l3.500-3 3 6 2-1-2.500-6H11z" fill="#fff" stroke="#000"/></svg>
</body>
</html>
```
FILE: styles.css
```css
* { box-sizing: border-box; }
body {
  margin: 0; height: 100vh; overflow: hidden; display: flex; flex-direction: column;
  position: relative; padding-right: 4px; background: #000; color: #f0f0f0;
  font: 12px/16px "Noto Sans", "Noto Sans CJK SC", sans-serif;
}
button, select, input { font: inherit; color: inherit; margin: 0; }
button { border: 0; padding: 0; background: none; white-space: nowrap; }
a { color: inherit; text-decoration: none; white-space: nowrap; }
h2 { margin: 0; font: inherit; white-space: nowrap; }
svg { display: block; flex: none; }
.defs { position: absolute; width: 0; height: 0; }
.i10 { width: 10px; height: 10px; }
.i16 { width: 16px; height: 16px; }
.i18 { width: 18px; height: 18px; }
.i20 { width: 20px; height: 20px; }
.i22 { width: 22px; height: 22px; }
.i24 { width: 24px; height: 24px; }
.i26 { width: 26px; height: 26px; }
.i28 { width: 28px; height: 28px; }
.pale { color: #b4cce0; }
.blue { color: #5a90c8; }
.lite { color: #dcdee2; }
.bare { display: flex; align-items: center; gap: 6px; }

/* menu and ribbon */
.top { display: flex; background: #3b4453; height: 114px; flex: none; }
.ribbon-side { flex: 1; min-width: 0; }
.menu { display: flex; height: 15px; background: #222831; color: #b4b8be; overflow: hidden; }
.menu a { padding: 0 10px; line-height: 12px; }
.menu .on { background: #3b4453; color: #f4f4f4; }
.menu-more { width: 46px; height: 12px; }
.ribbon { display: flex; height: 99px; }
.grp { display: flex; flex-direction: column; align-items: center; border-right: 1px solid #222831; height: 98px; flex: none; }
.grp h2 { margin-top: auto; }
.grp.last { border: 0; width: 92px; }
.items { display: flex; justify-content: center; width: 100%; padding-top: 8px; }
.items button { display: grid; position: relative; width: 100%; height: 72px; justify-items: center; align-content: start; text-align: center; }
.items svg { width: 32px; height: 32px; margin-bottom: 4px; }
.items .w45 { width: 45px; } .items .w54 { width: 54px; } .items .w62 { width: 62px; }
.items .w66 { width: 66px; } .items .w74 { width: 74px; } .items .w78 { width: 78px; }
.g111 { width: 111px; } .g414 { width: 414px; } .g58 { width: 58px; } .g71 { width: 71px; }
.g104 { width: 104px; } .g78 { width: 78px; } .g83 { width: 83px; }
.g111 .items, .g414 .items { justify-content: flex-start; }
.dd::after, .c::after, .arrow::after, .car, .sel::after {
  content: ""; width: 0; height: 0; border: 4px solid transparent; border-top-color: #e4e4e4; border-bottom: 0;
}
.dd::after { border-width: 3px; border-bottom: 0; margin-top: 3px; }
.side::after { position: absolute; right: 0; top: 48px; }

/* right tool block */
.tools { width: 281px; padding-left: 1px; background: #3c3c3c; border-left: 1px solid #222831; flex: none; }
.layout { display: flex; height: 15px; background: #222831; overflow: hidden; margin-bottom: 2px; }
.layout label { width: 60px; line-height: 12px; color: #c8c8c8; white-space: nowrap; }
.layout .sel { flex: 1; height: 14px; background: #4d586c; }
.layout select { line-height: 12px; height: 12px; }
.layout .bare { width: 20px; height: 12px; justify-content: center; }
.sel { position: relative; display: block; }
.sel select { appearance: none; width: 100%; height: 100%; border: 0; background: none; padding: 0 3px; outline: 0; }
.sel::after { position: absolute; right: 4px; top: calc(50% - 2px); pointer-events: none; }
.btn { display: flex; align-items: center; justify-content: center; background: #4d4d4d; border: 1px solid #666; }
.trow { display: flex; gap: 2px; height: 28px; margin-bottom: 6px; }
.trow .btn { gap: 2px; }
.trow.wide { gap: 5px; }
.trow.wide .btn { gap: 5px; }
.trow.tight { gap: 1px; }
.grow { flex: 1; }
.sq { width: 26px; overflow: hidden; }
.trow .apart { margin-left: 2px; }
.arrow::after { margin-left: 8px; }
.off { color: #808080; background: #444; border-color: #555; }
.trow .off { gap: 8px; }
.off svg { color: #6c7076; }
.sel-on { border-color: #406eff; }

/* document tabs */
.tabs { display: flex; align-items: flex-end; height: 26px; padding-left: 14px; background: #222831; flex: none; }
.tab { display: flex; align-items: center; justify-content: space-between; width: 122px; height: 22px; padding: 0 14px 0 10px; margin-right: 2px; background: #2e3541; color: #a8acb2; border-radius: 12px 10px 8px 4px; }
.tab:first-child { width: 126px; padding-left: 14px; }
.tab.on { width: 124px; background: #3b4453; color: #fff; font-weight: bold; padding: 0 15px 0 7px; border-radius: 10px 10px 0 0; margin-right: 4px; }
.tab.on svg { color: #aaaeb4; }
.tab-add { width: 22px; height: 18px; margin-bottom: 2px; background: #2e3541; color: #a8acb2; border-radius: 2px 8px 2px 8px; display: grid; place-items: center; }

/* command buttons */
.toolbar { display: flex; gap: 10px; height: 34px; flex: none; padding: 1px 12px 0 6px; background: #3c3c3c; border-top: 5px solid #3b4453; border-bottom: 4px solid #3b4453; box-shadow: inset 0 1px #000; }
.toolbar .btn { padding: 0 11px; height: 24px; }
.toolbar .act { background: #406eff; border-color: #6080e0; padding: 0 10px; }
.order { display: flex; gap: 9px; width: 113px; padding-left: 4px; }
.end { margin-left: auto; }

/* work area */
.main { flex: 1; display: flex; gap: 3px; min-height: 0; background: #3b4453; }
.left { width: 323px; flex: none; display: flex; flex-direction: column; padding: 2px 0 5px; }
.ph { height: 22px; margin-bottom: 2px; background: #2d3340; line-height: 20px; padding-left: 5px; display: flex; gap: 6px; border-top-right-radius: 4px; }
.left .ph { padding-left: 1px; }
.ph::before { content: ""; width: 4px; height: 9px; margin-top: 7px; background: repeating-linear-gradient(#aaa 0 1px, transparent 1px 2px); }
.filter { display: flex; align-items: center; height: 49px; background: #3c3c3c; flex: none; }
.filter .sel { height: 28px; border: 1px solid #686868; background: #333; margin-right: 5px; }
.f1 { width: 78px; } .f2 { width: 86px; }
.dim { color: #a8a8a8; }
.filter label { display: flex; align-items: center; gap: 4px; margin-right: 6px; white-space: nowrap; }
.filter input { appearance: none; width: 14px; height: 14px; border-radius: 50%; background: #2a2a2a; border: 1px solid #666; }
.filter input:checked { background: radial-gradient(#fff 4px, #2a2a2a 5px); }
.burger { width: 20px; height: 20px; border: 1px solid #686868; background: #4a4a4a; display: grid; align-content: space-evenly; margin-left: -2px; padding: 0 1px; }
.burger i { height: 2px; background: #e4e4ec; }
.tree { flex: 1; margin: 0; padding: 0; list-style: none; background: #292929; min-height: 0; }
.tree li { display: flex; height: 32px; align-items: center; padding-right: 4px; }
.tree label { display: flex; align-items: center; flex: 1; white-space: nowrap; }
.tree label svg { margin: 0 6px 0 5px; }
.tree input { appearance: none; width: 14px; height: 14px; border: 1px solid #686868; background: #333; position: relative; }
.tree .dis { border-color: #404040; background: #2c2c2c; }
.tree .dis2 { border-color: #505050; background: #2c2c2c; }
.tree input:checked::after { content: ""; position: absolute; left: 4px; top: 1px; width: 4px; height: 7px; border: solid #808080; border-width: 0 1px 1px 0; transform: rotate(40deg); }
.tree .cur { background: #406eff; font-weight: bold; }
.cur input { background: #3a6ea8; border-color: #70a0d8; }
.tree .cur input:checked::after { border-color: #b8ecff; }
.star { width: 17px; height: 17px; }
.g { width: 20px; height: 32px; position: relative; flex: none; }
.g.v, .g.t, .g.l { background: linear-gradient(#6c6c6c, #6c6c6c) 6px 0 / 1px 100% no-repeat; }
.g.l { background-size: 1px 16px; }
.g.first { background-position: 6px 16px; }
.g.t::before, .g.l::before { content: ""; position: absolute; left: 6px; top: 16px; width: 11px; height: 1px; background: #6c6c6c; }
.open::after { content: ""; position: absolute; left: 4px; top: 13px; width: 6px; height: 6px; background: linear-gradient(135deg, transparent 50%, #f4f4f4 50%); }
.lfoot { display: flex; align-items: center; height: 56px; flex: none; background: #3c3c3c; border-top: 1px solid #686868; padding-left: 1px; }
.split { display: flex; width: 122px; height: 33px; margin-left: 15px; border: 1px solid #606060; background: #4a4a4a; }
.split:last-child { margin-left: 16px; }
.split button { flex: 1; display: flex; align-items: center; justify-content: center; gap: 6px; }
.split button + button { flex: none; width: 28px; border-left: 1px solid #606060; }

.center { flex: 1; min-width: 0; display: flex; flex-direction: column; gap: 3px; padding-bottom: 1px; }
.view { flex: 1; min-height: 0; position: relative; background: #222831; }
.cad { width: 100%; height: 100%; }
.purple { stroke: #bf00ff; }
.dash { stroke: #ffbf00; stroke-dasharray: 17 7; stroke-dashoffset: 9; }
.axis { stroke: #ffbf00; stroke-dasharray: 3 1; }
.cols { stroke: #20b4f8; fill: none; }
.edge { stroke: #ffbf00; }
.node { stroke: #1478b8; }
.names { fill: #00f000; font: 11px "Liberation Sans", sans-serif; }
.ucs { font: 18px "Liberation Sans", sans-serif; }
.caption { fill: #e8e8e8; font: 300 18px "Liberation Sans", "Noto Sans CJK SC", sans-serif; text-anchor: middle; }
.compass { fill: #b4b8bc; font: 300 18px "Noto Sans CJK SC", sans-serif; text-anchor: middle; }
.cube { fill: #4a4c50; font: 300 28px "Noto Sans CJK SC", sans-serif; text-anchor: middle; }
.wcs { fill: #40444a; font: 11px "Liberation Sans", sans-serif; }
.vlabel { position: absolute; left: 4px; top: 5px; }
.wctl { position: absolute; right: 10px; top: 9px; display: flex; gap: 8px; }
.wctl svg { width: 12px; height: 12px; }
.cmd { display: flex; height: 58px; flex: none; }
.cmdbar { width: 25px; background: #2d3340; display: flex; flex-direction: column; align-items: center; padding-top: 4px; color: #d8dade; }
.cmdbar .dots { width: 18px; height: 5px; margin-bottom: 7px; background: repeating-linear-gradient(90deg, #ccc 0 2px, transparent 2px 3px); }
.cmdbar .i16 { margin-top: 13px; }
.cmdbody { flex: 1; color: #000; display: flex; flex-direction: column; }
.hist { height: 37px; background: #c8c8c8; padding: 5px 2px 0; font-family: "Liberation Mono", "Noto Sans CJK SC", monospace; margin-bottom: 1px; }
.entry { display: flex; align-items: center; flex: 1; gap: 3px; padding-left: 4px; background: #fff; }
.entry .car { border-top-color: #666; }
.entry input { flex: 1; border: 0; outline: 0; background: none; font-style: italic; padding: 0 4px; }
.entry input::placeholder { color: #777; }

.right { width: 368px; flex: none; display: flex; flex-direction: column; padding: 2px 0 5px; margin-left: -1px; }
.prow { display: flex; height: 24px; gap: 3px; padding: 0 0 1px 3px; background: #3c3c3c; flex: none; }
.prow > .bare { width: 20px; background: #4a4a4a; justify-content: center; }
.prow .sel { flex: 1; border: 1px solid #686868; background: #323232; }
.prow select { padding-left: 4px; }
.prow.two { height: 32px; align-items: center; border: 1px solid #686868; padding: 0 3px 0 7px; gap: 9px; }
.two input { flex: 1; height: 24px; border: 1px solid #686868; background: #323232; padding: 0 4px; outline: 0; }
.two input::placeholder { color: #a8a8a8; }
.pbody { flex: 1; background: #292929; border: solid #686868; border-width: 0 1px 1px; }
.pfoot { height: 70px; background: #3c3c3c; border: solid #686868; border-width: 0 1px 1px; }

/* status bar */
.status { height: 22px; flex: none; background: #222831; display: flex; overflow: hidden; border-top: 1px solid #3b4453; }
.ltabs { display: flex; height: 19px; color: #a8acb2; padding-left: 6px; gap: 2px; }
.ltabs a { width: 50px; text-align: center; background: #2c3340; border-radius: 0 0 10px 10px; line-height: 20px; }
.ltabs .on { background: #3b4453; color: #fff; font-weight: bold; }
.ltabs button { width: 26px; background: #2c3340; border-radius: 0 0 8px 8px; color: inherit; display: grid; place-items: center; }
.sbar { display: flex; gap: 3px; margin: 1px 0 0 auto; }
.sg { display: flex; height: 24px; background: #3b4453; }
.sg button { width: 24px; height: 24px; display: grid; place-items: center; }
.sg svg { width: 18px; height: 18px; }
.sg .c { width: 16px; }
.sg .w30 { width: 30px; }
.sg .w60 { width: 59px; }
.sg .l { justify-items: start; padding-left: 5px; }
.sg .r { justify-items: end; }
.sg .on { background: #5c8cc0; }
.sg .ln { margin-left: 1px; }
.coord { width: 180px; line-height: 24px; padding-left: 5px; white-space: nowrap; }
.sg .ban { background: #c8ccf0; color: #2c38b0; font-style: italic; width: 22px; margin-right: 2px; height: 19px; margin-top: 3px; font-size: 14px; }

.ime { position: absolute; right: 32px; bottom: 22px; width: 190px; height: 26px; background: #fff; display: flex; align-items: center; gap: 8px; }
.ime svg { width: 16px; height: 16px; }
.ime b { color: #1670d0; font-size: 16px; }
.ime .logo { width: 32px; height: 32px; margin: -4px -2px 0 -14px; }
.ime .face { width: 22px; height: 26px; margin-left: -2px; }
.pointer { position: absolute; left: 896px; top: 118px; width: 12px; height: 19px; }
```
